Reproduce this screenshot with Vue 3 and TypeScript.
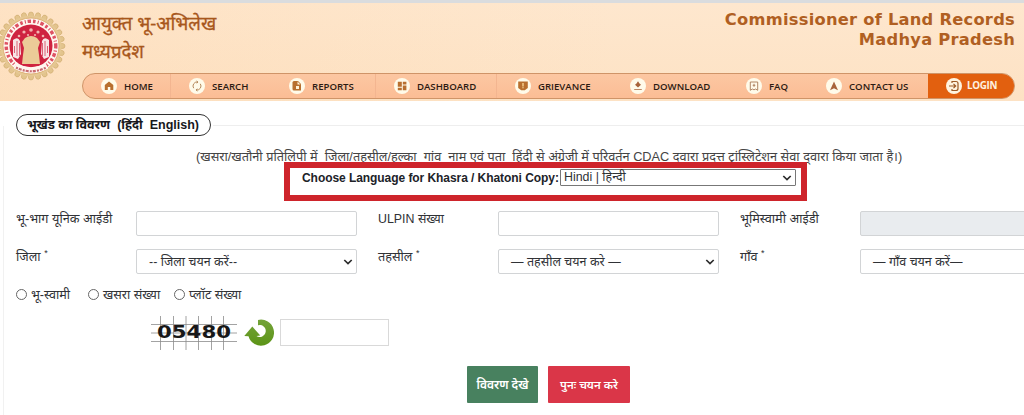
<script setup lang="ts">
interface NavItem {
  id: string
  label: string
  width: number
}

const navItems: NavItem[] = [
  { id: 'home', label: 'HOME', width: 88 },
  { id: 'search', label: 'SEARCH', width: 100 },
  { id: 'reports', label: 'REPORTS', width: 105 },
  { id: 'dashboard', label: 'DASHBOARD', width: 121 },
  { id: 'grievance', label: 'GRIEVANCE', width: 115 },
  { id: 'download', label: 'DOWNLOAD', width: 116 },
  { id: 'faq', label: 'FAQ', width: 80 },
  { id: 'contact', label: 'CONTACT US', width: 120 },
]

const radios: string[] = ['भू-स्वामी', 'खसरा संख्या', 'प्लॉट संख्या']
const teeth: number[] = Array.from({ length: 28 }, (_, i) => (i * 360) / 28)
</script>

<template>
  <div class="page">
    <header class="header">
      <svg class="emblem" viewBox="0 0 66 72">
        <g transform="translate(31 36)">
          <ellipse v-for="a in teeth" :key="a" cx="0" cy="-31" rx="2.6" ry="3" fill="#e3c48d" stroke="#cfab6e" stroke-width=".6" :transform="`rotate(${a})`" />
          <circle r="30.5" fill="#e5c893" />
          <circle r="28" fill="#fff6ef" stroke="#dba86c" stroke-width=".8" />
          <circle r="24.800" fill="none" stroke="#d8354a" stroke-width="3.400" stroke-dasharray="2.2 1.8 .9 1.5 3 1.8" pathLength="132" opacity=".85" />
          <circle r="21.500" fill="#cf2340" />
          <path d="M-18-6q5-4 7 1l1 13-3 5-5-2zM18-6q-5-4-7 1l-1 13 3 5 5-2z" fill="#f7e6e6" />
          <path d="M-14-5v15M-11.500-3v13M14-5v15M11.500-3v13M-16.500 0v7M16.500 0v7" stroke="#d8546a" stroke-width=".9" />
          <g fill="#f2b5b0">
            <circle cx="-7" cy="-14" r="1.600" /><circle cx="0" cy="-16" r="1.800" /><circle cx="7" cy="-14" r="1.600" />
            <circle cx="-12" cy="-10" r="1.300" /><circle cx="12" cy="-10" r="1.300" /><circle cx="-3" cy="-11" r="1.100" /><circle cx="4" cy="-11" r="1.100" />
          </g>
          <path d="M-6-8q6-4 12 0l3 4-2 6 1 7 1 9H-9l1-9 1-7-2-6z" fill="#eccb98" />
          <path d="M-16 20q16 8 32 0" fill="none" stroke="#fff6ef" stroke-width="5.500" />
          <path d="M-15 21.500q15 7.500 30 0" fill="none" stroke="#c96a70" stroke-width="2.2" stroke-dasharray="2 1 3 1.2" />
        </g>
      </svg>
      <div class="head-main">
        <div class="titles">
          <div class="title-hi">
            <div>आयुक्त भू-अभिलेख</div>
            <div>मध्यप्रदेश</div>
          </div>
          <div class="title-en">
            <div>Commissioner of Land Records</div>
            <div>Madhya Pradesh</div>
          </div>
        </div>
        <nav class="nav">
          <div v-for="item in navItems" :key="item.id" class="nav-item" :style="{ width: item.width + 'px' }">
            <svg class="nav-icon" viewBox="0 0 16 16">
              <circle cx="8" cy="8" r="8" fill="#fffbea" />
              <path v-if="item.id === 'home'" d="M8 3.500 3.800 7v5h3V9h2.500v3h3V7z" fill="#b8702f" />
              <path v-else-if="item.id === 'search'" d="M4.700 10.200A4 4 0 0 1 8.500 4M11.300 5.800A4 4 0 0 1 7.500 12M7.500 3l1.500 1-1.200 1.300M8.500 13 7 12l1.200-1.300" fill="none" stroke="#b58a5d" stroke-width="1" />
              <g v-else-if="item.id === 'reports'">
                <path d="M5 3h4l3 3v6.500H5q-1.500 0-1.500-1.500V4.500Q3.500 3 5 3z" fill="#b8702f" />
                <path d="M8.500 3.500v3h3M7 8h3v3H7z" fill="#fff2d8" />
              </g>
              <path v-else-if="item.id === 'dashboard'" d="M3.800 3.800h4v5h-4zM8.800 3.800h3.600v2.600H8.800zM3.800 9.800h4v2.500h-4zM8.800 7.400h3.600v4.900H8.800z" fill="#b8702f" />
              <g v-else-if="item.id === 'grievance'">
                <path d="M3.200 3.500h9.600v6.500l-3 2.300H6.200l-3-2.300z" fill="#b8702f" />
                <path d="M8 5v3.500M8 9.300v1" stroke="#f7d592" stroke-width="1.400" />
              </g>
              <path v-else-if="item.id === 'download'" d="M8 3.200 9.500 5.500 11 6.800 8 9.600 5 6.800 6.500 5.500zM4.200 11.200h7.600v.900H4.200z" fill="#a8643a" />
              <path v-else-if="item.id === 'faq'" d="M4.300 4h7.400v8.300L9.700 11l-1.700.8L6.300 11l-2 1.300zM8 5.800v3M6.700 7.300h2.600" fill="none" stroke="#a87c58" stroke-width=".9" />
              <path v-else d="M8 3.500 12 12.300l-2.600-1.400L8 10.200l-1.400.7L4 12.300z" fill="#a8643a" />
            </svg>
            <span class="nav-label">{{ item.label }}</span>
          </div>
          <div class="login">
            <svg class="nav-icon" viewBox="0 0 16 16">
              <circle cx="8" cy="8" r="8" fill="#fff4df" />
              <path d="M6 5V3.500h4q2 0 2 2v5q0 2-2 2H6V11M3 8h6.500M7.500 5.800 9.700 8l-2.200 2.200" fill="none" stroke="#9c5a25" stroke-width="1.200" />
            </svg>
            <span class="login-label">LOGIN</span>
          </div>
        </nav>
      </div>
    </header>

    <main class="panel">
      <div class="legend-row">
        <div class="legend"><span>भूखंड का विवरण</span><span>(हिंदी&nbsp; English)</span></div>
        <div class="legend-line"></div>
      </div>
      <div class="body">
        <p class="note">(खसरा/खतौनी प्रतिलिपी में&nbsp; जिला/तहसील/हल्का&nbsp; गांव&nbsp; नाम एवं पता&nbsp; हिंदी से अंग्रेजी में परिवर्तन CDAC द्&zwnj;वारा प्रदत्त ट्रांस्लिटेशन सेवा द्&zwnj;वारा किया जाता है।)</p>
        <div class="language">
          <span class="lang-label">Choose Language for Khasra / Khatoni Copy:</span>
          <div class="lang-select">
            <span>Hindi | हिन्दी</span>
            <svg class="chevron" viewBox="0 0 10 6"><path d="m1.300 1 3.700 3.500L8.700 1" /></svg>
          </div>
        </div>

        <div class="grid">
          <label>भू-भाग यूनिक आईडी</label>
          <div class="field"></div>
          <label class="ulpin">ULPIN संख्या</label>
          <div class="field"></div>
          <label>भूमिस्वामी आईडी</label>
          <div class="field disabled"></div>

          <label>जिला <sup>*</sup></label>
          <div class="field"><span>-- जिला चयन करें--</span><svg class="chevron" viewBox="0 0 10 6"><path d="m1.300 1 3.700 3.500L8.700 1" /></svg></div>
          <label>तहसील <sup>*</sup></label>
          <div class="field"><span>— तहसील चयन करे —</span><svg class="chevron" viewBox="0 0 10 6"><path d="m1.300 1 3.700 3.500L8.700 1" /></svg></div>
          <label>गाँव <sup>*</sup></label>
          <div class="field"><span>— गाँव चयन करें—</span></div>
        </div>

        <div class="radios">
          <label v-for="(r, i) in radios" :key="r" class="radio" :class="'radio-' + i"><i class="dot"></i><span>{{ r }}</span></label>
        </div>

        <div class="captcha">
          <svg class="code" viewBox="0 0 86 34">
            <path d="M0 8.500h86M0 17h86M0 25.500h86M9.500 0v34M22.500 0v34M35 0v34M47.500 0v34M60.500 0v34M72.500 0v34" stroke="#8c8c8c" stroke-width=".8" fill="none" />
            <text x="6" y="21.500" textLength="74" lengthAdjust="spacingAndGlyphs">05480</text>
          </svg>
          <svg class="refresh" viewBox="0 0 30 28">
            <defs>
              <linearGradient id="leaf" x1="0" y1="0" x2="0" y2="1"><stop offset="0" stop-color="#74a33a" /><stop offset="1" stop-color="#5c9417" /></linearGradient>
            </defs>
            <path d="M14 1A13 13 0 1 1 4.500 17.200L.300 17 8.300 7.500 16.300 16.500 12.500 17A6 6 0 1 0 14 6.200z" fill="url(#leaf)" />
          </svg>
          <div class="code-input"></div>
        </div>

        <div class="actions">
          <button class="view">विवरण देखे</button>
          <button class="reset">पुनः चयन करे</button>
        </div>
      </div>
    </main>
  </div>
</template>

<style>
body { overflow: hidden; }
</style>

<style scoped>
.page { width: 1024px; height: 415px; overflow: hidden; background: #fff; color: #303236; font-family: "Liberation Sans", "Noto Sans", sans-serif; box-sizing: border-box; }
.page * { box-sizing: border-box; }
.header { display: flex; height: 101px; border-top: 3px solid #dadcde; background: linear-gradient(90deg, rgba(255, 211, 164, .22), rgba(255, 228, 201, 0) 60%), linear-gradient(#fee7ce, #fde2c4); }
.emblem { width: 66px; height: 72px; margin-top: 7px; flex: none; }
.head-main { margin-left: 16px; width: 933px; }
.titles { display: flex; justify-content: space-between; height: 70px; }
.title-hi { font-family: "Noto Sans", sans-serif; color: #a8571c; font-size: 18.6px; line-height: 28px; padding-top: 6px; white-space: nowrap; -webkit-text-stroke: .3px #a8571c; }
.title-en { font-family: "DejaVu Sans", sans-serif; font-weight: 700; color: #b05f22; font-size: 16.3px; line-height: 20px; padding-top: 7px; letter-spacing: .25px; text-align: right; white-space: nowrap; }
.nav { display: flex; height: 26px; border: 1px solid #cf9468; border-radius: 13px; background: linear-gradient(#fcc7a2, #fbbd95); overflow: hidden; }
.nav-item { display: flex; align-items: center; padding-left: 18px; border-right: 1px solid #f3b590; flex: none; }
.nav-item:nth-child(2), .nav-item:nth-child(5), .nav-item:nth-child(6), .nav-item:nth-child(7), .nav-item:nth-child(8) { border-right-color: transparent; }
.nav-icon { width: 16px; height: 16px; flex: none; }
.nav-label { margin-left: 7px; padding-top: 2px; font: 600 9.6px/14px "Open Sans", sans-serif; color: #2b1a12; white-space: nowrap; }
.login { flex: 1; display: flex; align-items: center; padding-left: 18px; background: #e2600f; }
.login-label { margin-left: 5px; font: 700 9.8px/14px "Open Sans", sans-serif; letter-spacing: -.3px; color: #fff1e0; }
.panel { margin: 13px 0 0 3px; width: 1021px; }
.legend-row { display: flex; align-items: center; height: 22px; padding-left: 13px; }
.legend { height: 22px; width: 195px; flex: none; border: 1px solid #333; border-radius: 11px; padding: 0 0 0 10px; display: flex; gap: 7px; font-size: 12.5px; line-height: 20px; font-weight: 700; color: #17181b; white-space: nowrap; }
.legend-line { flex: 1; height: 1px; margin-left: 2px; background: #eee; }
.body { border-left: 1px solid #f1f1f1; margin-top: -10px; padding-top: 24px; height: 289px; }
.note { margin: 0 0 0 192px; height: 12px; font-size: 12.74px; line-height: 14px; white-space: nowrap; color: #444; }
.language { position: relative; display: flex; align-items: center; margin-left: 280px; width: 523px; height: 39px; border: 6px solid #ce242b; background: #fff; padding: 0 5px 8px 12px; }
.lang-label { font-size: 12px; font-weight: 700; width: 258px; white-space: nowrap; color: #202228; letter-spacing: -.06px; }
.lang-select { flex: 1; height: 17px; display: flex; align-items: center; justify-content: space-between; border: 1px solid #777; border-radius: 1px; padding: 0 3px 0 3px; font-size: 12.4px; line-height: 15px; }
.chevron { width: 10px; height: 6px; fill: none; stroke: #2b2b2b; stroke-width: 1.7; }
.grid { display: grid; grid-template-columns: 120px 242px 120px 242px 120px 242px; grid-auto-rows: 25px; row-gap: 13px; margin: 10px 0 0 12px; font-size: 12.7px; }
.grid label { line-height: 16px; white-space: nowrap; }
.grid .ulpin { font-size: 12.4px; }
.grid sup { font-size: 9px; line-height: 0; vertical-align: 5px; }
.field { width: 221px; height: 25px; border: 1px solid #d2d4d6; border-radius: 2px; display: flex; align-items: center; justify-content: space-between; padding: 0 3px 0 12px; font-size: 12.5px; white-space: nowrap; }
.disabled { background: #e9ecef; }
.radios { display: flex; margin: 13px 0 0 12px; height: 16px; font-size: 12.6px; line-height: 16px; }
.radio { display: flex; gap: 4px; align-items: flex-start; white-space: nowrap; }
.radio-0 { width: 72px; }
.radio-1 { width: 86px; }
.dot { width: 11px; height: 11px; border: 1px solid #666; border-radius: 50%; margin-top: 2px; flex: none; }
.captcha { display: flex; margin: 13px 0 0 147px; height: 34px; }
.code { width: 86px; height: 34px; font: 700 17px "DejaVu Sans", sans-serif; fill: #181818; }
.refresh { width: 30px; height: 28px; margin: 3px 0 0 7px; }
.code-input { width: 109px; height: 27px; border: 1px solid #d9d9d9; margin: 3px 0 0 6px; }
.actions { display: flex; gap: 10px; margin: 16px 0 0 463px; }
.actions button { height: 37px; border: 0; border-radius: 1px; padding: 0; color: #fff; font: 600 12px "Noto Sans", sans-serif; white-space: nowrap; }
.view { width: 71px; background: #48815f; }
.actions .reset { width: 82px; background: #da3648; font-size: 11.5px; }
</style>
